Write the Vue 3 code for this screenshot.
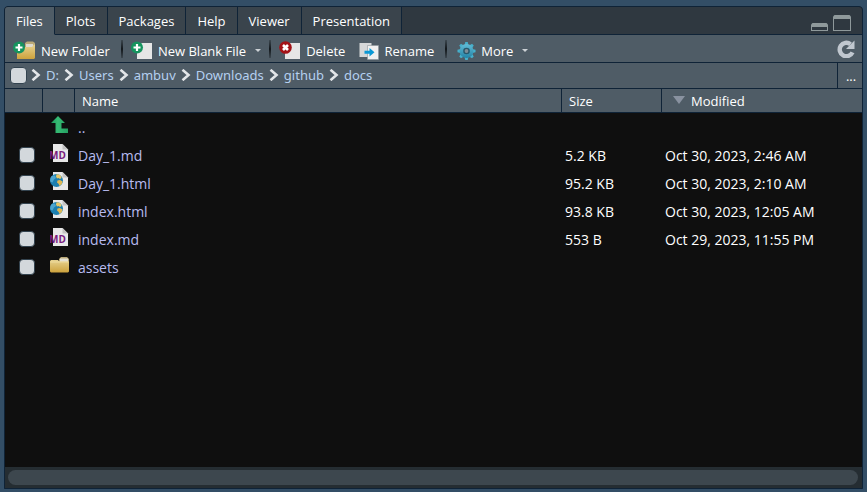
<script setup>
import { ref } from 'vue'

const tabs = ['Files', 'Plots', 'Packages', 'Help', 'Viewer', 'Presentation']
const active = ref('Files')
const crumbs = ['D:', 'Users', 'ambuv', 'Downloads', 'github', 'docs']
const files = [
  { name: '..', icon: 'up', size: '', modified: '' },
  { name: 'Day_1.md', icon: 'md', size: '5.2 KB', modified: 'Oct 30, 2023, 2:46 AM' },
  { name: 'Day_1.html', icon: 'html', size: '95.2 KB', modified: 'Oct 30, 2023, 2:10 AM' },
  { name: 'index.html', icon: 'html', size: '93.8 KB', modified: 'Oct 30, 2023, 12:05 AM' },
  { name: 'index.md', icon: 'md', size: '553 B', modified: 'Oct 29, 2023, 11:55 PM' },
  { name: 'assets', icon: 'folder', size: '', modified: '' }
]
</script>

<template>
  <main class="page">
    <svg class="defs" width="0" height="0" aria-hidden="true">
      <defs>
        <linearGradient id="gold" x1="0" y1="0" x2="0" y2="1">
          <stop offset="0" stop-color="#e6d291" />
          <stop offset="1" stop-color="#cda23c" />
        </linearGradient>
        <linearGradient id="teal" x1="0" y1="0" x2="0" y2="1">
          <stop offset="0" stop-color="#62bcd6" />
          <stop offset="1" stop-color="#2383a6" />
        </linearGradient>
        <linearGradient id="green" x1="0" y1="0" x2="1" y2="0">
          <stop offset="0" stop-color="#1f9c5c" />
          <stop offset="0.400" stop-color="#36bb74" />
          <stop offset="1" stop-color="#259f61" />
        </linearGradient>
      </defs>
    </svg>
    <section class="panel">
      <header class="tabstrip">
        <nav class="tabs" role="tablist">
          <button
            v-for="tab in tabs"
            :key="tab"
            class="tab"
            :class="{ active: tab === active }"
            role="tab"
            :aria-selected="tab === active"
            @click="active = tab"
          >{{ tab }}</button>
        </nav>
        <div class="window-buttons">
          <button class="plain" aria-label="Minimize">
            <svg width="17" height="8" viewBox="0 0 17 8">
              <path d="M1.500 0h14L17 1.500V8H0V1.500z" fill="#8f999b" />
              <path d="M1 4h15v3H1z" fill="#2f3840" />
            </svg>
          </button>
          <button class="plain" aria-label="Maximize">
            <svg width="18" height="16" viewBox="0 0 18 16">
              <path d="M1.500 0h15L18 1.500V16H0V1.500z" fill="#8f999b" />
              <path d="M1 4h16v11H1z" fill="#2f3840" />
            </svg>
          </button>
        </div>
      </header>

      <div class="toolbar">
        <button class="tool">
          <svg width="23" height="20" viewBox="0 0 23 20">
            <path d="M12 2l2-1.500h6L22 2v14H12z" fill="#b9a877" />
            <path d="M13 3h7v4h-7z" fill="#dedbd0" />
            <path d="M4 6h15l2-2.500h1V17l-1 1H4z" fill="url(#gold)" />
            <circle cx="6" cy="6.500" r="6" fill="#16945f" />
            <path d="M6 3v7M2.500 6.500h7" stroke="#fff" stroke-width="2.200" />
          </svg>
          <span>New Folder</span>
        </button>
        <i class="separator"></i>
        <button class="tool">
          <svg width="22" height="20" viewBox="0 0 22 20">
            <path d="M6 2h15v16H6z" fill="#e6e6e6" />
            <circle cx="6" cy="6.500" r="6" fill="#16945f" />
            <path d="M6 3v7M2.500 6.500h7" stroke="#fff" stroke-width="2.200" />
          </svg>
          <span>New Blank File</span>
          <b class="caret"></b>
        </button>
        <i class="separator narrow"></i>
        <button class="tool">
          <svg width="22" height="20" viewBox="0 0 22 20">
            <path d="M6 2h15v16H6z" fill="#e6e6e6" />
            <circle cx="6.500" cy="6.500" r="6.300" fill="#a31217" />
            <path d="M4 4l5 5M9 4l-5 5" stroke="#fff" stroke-width="2.600" />
          </svg>
          <span>Delete</span>
        </button>
        <button class="tool rename">
          <svg width="20" height="20" viewBox="0 0 20 20">
            <path d="M0.500 2h12v14h-12z" fill="#d5d7d8" />
            <path d="M8.500 4.500h11v14h-11z" fill="#f0f0f0" stroke="#8e969b" stroke-width="0.600" />
            <path d="M5.500 9.700H10.500V7l5 4.200-5 4.300V12.700H5.500z" fill="#0b98d4" />
          </svg>
          <span>Rename</span>
        </button>
        <i class="separator"></i>
        <button class="tool more">
          <svg width="19" height="20" viewBox="0 0 20 20">
            <g fill="#46b0cb">
              <path
                v-for="n in 8"
                :key="n"
                d="M7.700 5L8.700 0.500H11.300L12.300 5z"
                :transform="`rotate(${n * 45} 10 10)`"
              />
            </g>
            <circle cx="10" cy="10" r="7.300" fill="url(#teal)" />
            <circle cx="10" cy="10" r="3.500" fill="#27586c" />
            <circle cx="10" cy="10" r="2" fill="#7e8d96" />
          </svg>
          <span>More</span>
          <b class="caret"></b>
        </button>
        <button class="plain refresh" aria-label="Refresh">
          <svg width="18" height="18" viewBox="0 0 18 18">
            <path d="M15.500 12.300A6.700 6.700 0 1 1 13.500 4.200" fill="none" stroke="#c0c7cf" stroke-width="4.400" />
            <path d="M17.500 0.500V9H9z" fill="#c0c7cf" />
          </svg>
        </button>
      </div>

      <div class="pathbar">
        <input class="check" type="checkbox" aria-label="Select all files" />
        <nav class="crumbs">
          <template v-for="crumb in crumbs" :key="crumb">
            <svg width="10" height="12" viewBox="0 0 10 12">
              <path d="M1.500 0.800L7.500 6L1.500 11.200" fill="none" stroke="#e3e6e9" stroke-width="2.600" />
            </svg>
            <a href="#">{{ crumb }}</a>
          </template>
        </nav>
        <button class="browse" aria-label="Go to directory">...</button>
      </div>

      <div class="listing">
        <table>
          <colgroup>
            <col class="c-check" />
            <col class="c-icon" />
            <col />
            <col class="c-size" />
            <col class="c-modified" />
          </colgroup>
          <thead>
            <tr>
              <th></th>
              <th></th>
              <th>Name</th>
              <th>Size</th>
              <th><span class="sort"></span>Modified</th>
            </tr>
          </thead>
          <tbody>
            <tr v-for="file in files" :key="file.name">
              <td class="pick">
                <input v-if="file.icon !== 'up'" class="check" type="checkbox" :aria-label="file.name" />
              </td>
              <td class="icon">
                <svg v-if="file.icon === 'up'" width="20" height="18" viewBox="0 0 20 18">
                  <path d="M8 0L15 7H11.500V12.500H18V17H5.500V7H1z" fill="url(#green)" />
                </svg>
                <svg v-else-if="file.icon === 'folder'" width="20" height="18" viewBox="0 0 20 18">
                  <path d="M9 3l2-2h6l2 2v12H9z" fill="#b9a877" />
                  <path d="M10 2.500h8v4h-8z" fill="#e4e0d2" />
                  <path d="M0 5l1-1h7l1.500 1.500H19v10l-1 1H1l-1-1z" fill="url(#gold)" />
                  <path d="M0.500 6h18" stroke="#f2dfa2" stroke-width="0.800" />
                </svg>
                <svg v-else width="20" height="18" viewBox="0 0 20 18">
                  <path d="M3 0h9.500l5.500 5.500V18H3z" fill="#e8e8e8" />
                  <path d="M12.500 0v5.500H18z" fill="#c2c2c2" />
                  <text v-if="file.icon === 'md'" class="md" x="-1" y="15">MD</text>
                  <g v-else>
                    <circle cx="6.500" cy="8.500" r="6.500" fill="#1b7fb0" />
                    <path d="M2 3.800C0.500 5 0 7 0.200 9.500l2.300 1 1.500-3 2-1.500-1-2.500z" fill="#4da5cf" />
                    <path d="M6.500 2.200l2.500 0.300 2 1.500 0.500 2-1.500 1-1.500-1-1.500 0.500-1-2z" fill="#e9c766" />
                    <path d="M7.500 8.500l2.500-0.500 2.500 1.500-0.700 2.500-2.300 2-1-2.300-1.500-1.200z" fill="#e0b955" />
                  </g>
                </svg>
              </td>
              <td><a href="#">{{ file.name }}</a></td>
              <td>{{ file.size }}</td>
              <td>{{ file.modified }}</td>
            </tr>
          </tbody>
        </table>
      </div>
      <div class="scrollbar"><div class="thumb"></div></div>
    </section>
  </main>
</template>

<style>
body {
  background: #334e66;
}
</style>

<style scoped>
.page {
  box-sizing: border-box;
  min-height: 100vh;
  padding: 6px 4px 3px;
  display: flex;
  background: #334e66;
  color: #fff;
  font: 13px/18px "Open Sans", "Noto Sans", sans-serif;
}
.defs {
  position: absolute;
}
.panel {
  flex: 1;
  min-width: 0;
  display: flex;
  flex-direction: column;
  border: 1px solid #0f2337;
  border-radius: 4px 4px 0 0;
  overflow: hidden;
  background: #0f0f0f;
}
button {
  border: 0;
  padding: 0;
  background: none;
  color: inherit;
  font: inherit;
  white-space: nowrap;
}
svg {
  display: block;
  flex: none;
}
a {
  text-decoration: none;
}
.tabstrip {
  display: flex;
  justify-content: space-between;
  height: 28px;
  background: #2f3840;
}
.tabs {
  display: flex;
}
.tab {
  padding: 0 11px;
  background: #3a444c;
  border-right: 1px solid #0f2337;
  border-bottom: 1px solid #0f2337;
}
.tab.active {
  background: #4f5c66;
  border-bottom-color: #4f5c66;
}
.window-buttons {
  flex: 1;
  display: flex;
  align-items: flex-end;
  justify-content: flex-end;
  gap: 5px;
  padding: 0 11px 3px 0;
  border-bottom: 1px solid #0f2337;
}
.toolbar {
  display: flex;
  align-items: center;
  height: 27px;
  padding: 0 7px 0 8px;
  background: #4f5c66;
  border-bottom: 1px solid #0f2337;
}
.tool {
  display: flex;
  align-items: center;
  gap: 5px;
  padding-top: 4px;
}
.rename {
  margin-left: 14px;
}
.more {
  margin-left: 2px;
}
.caret {
  margin-left: 4px;
  border: 3px solid transparent;
  border-top-color: #cdd2d6;
  border-bottom: 0;
}
.separator {
  width: 2px;
  height: 18px;
  margin: 0 8px 0 11px;
  background: linear-gradient(#3d4850, #12171b 50%, #3d4850);
}
.separator.narrow {
  margin: 0 8px;
}
.refresh {
  margin-left: auto;
}
.pathbar {
  display: flex;
  align-items: center;
  height: 25px;
  padding-left: 5px;
  background: #4f5c66;
  border-bottom: 1px solid #0f2337;
}
.check {
  appearance: none;
  flex: none;
  display: block;
  box-sizing: border-box;
  width: 17px;
  height: 17px;
  margin: 0;
  border: 1px solid #33434f;
  border-radius: 4px;
  background: #d3d8dc;
}
.crumbs {
  display: flex;
  align-items: center;
  gap: 5px;
  flex: 1;
  padding: 0 0 1px 4px;
  font-family: "Noto Sans", "Open Sans", sans-serif;
}
.crumbs a {
  color: #b5d0f0;
}
.browse {
  align-self: stretch;
  width: 25px;
  padding-left: 2px;
  border-left: 1px solid #0f2337;
}
.listing {
  flex: 1;
}
table {
  width: 100%;
  table-layout: fixed;
  border-collapse: separate;
  border-spacing: 0;
}
.c-check {
  width: 37px;
}
.c-icon {
  width: 32px;
}
.c-size {
  width: 100px;
}
.c-modified {
  width: 201px;
}
th {
  box-sizing: border-box;
  height: 24px;
  padding: 0 7px;
  background: #4f5c66;
  border-bottom: 1px solid #0f2337;
  font-weight: 400;
  text-align: left;
}
th + th {
  border-left: 1px solid #0f2337;
}
.sort {
  display: inline-block;
  margin: 0 6px 2px 4px;
  border: 6px solid transparent;
  border-top: 8px solid #8992a0;
  border-bottom: 0;
}
td {
  box-sizing: border-box;
  height: 28px;
  padding: 2px 4px 0;
  font-size: 14px;
}
td.pick {
  padding: 0 0 0 14px;
}
.pick .check {
  width: 16px;
  height: 16px;
}
td.icon {
  padding: 0 0 4px 8px;
}
td a {
  color: #b7bbf0;
}
.md {
  fill: #7b1c80;
  font-size: 10px;
  font-weight: 700;
}
.scrollbar {
  padding: 3px 4px 3px 3px;
  background: #252d32;
}
.thumb {
  height: 15px;
  border-radius: 8px;
  background: #3d474e;
}
</style>
